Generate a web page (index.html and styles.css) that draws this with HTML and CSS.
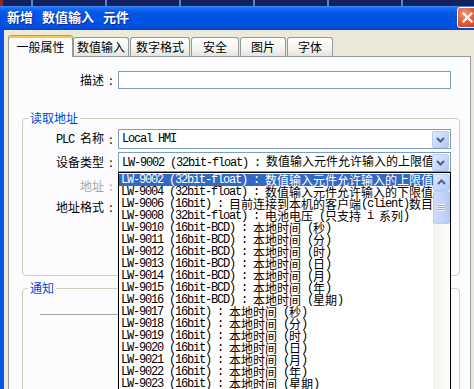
FILE: index.html
```html
<!DOCTYPE html>
<html lang="zh-CN">
<head>
<meta charset="utf-8">
<title>新增 数值输入 元件</title>
<link rel="stylesheet" href="styles.css">
</head>
<body>
<div class="top"></div>
<div class="titlebar">
  <div class="title">新增 数值输入 元件</div>
  <div class="close"><svg width="13" height="13" viewBox="0 0 13 13"><path d="M2.5 2.5L10.5 10.5M10.5 2.5L2.5 10.5" stroke="#fff" stroke-width="2.2" stroke-linecap="square"/></svg></div>
</div>
<div class="frame">
  <div class="tabs">
    <div class="tab sel w1">一般属性</div>
    <div class="tab w2">数值输入</div>
    <div class="tab w3">数字格式</div>
    <div class="tab w4">安全</div>
    <div class="tab w5">图片</div>
    <div class="tab w6">字体</div>
  </div>
  <div class="panel">
    <div class="row desc">
      <div class="lab">描述</div><div class="colon">:</div><div class="input"></div>
    </div>
    <fieldset class="grp g1">
      <legend>读取地址</legend>
      <div class="row">
        <div class="lab"><span class="mono">PLC </span>名称</div><div class="colon">:</div>
        <div class="combo">
          <span class="val mono">Local HMI</span>
          <span class="dd"><svg width="15" height="15" viewBox="0 0 15 15"><path d="M4 6L7.5 9.5L11 6" fill="none" stroke="#4D6185" stroke-width="2"/></svg></span>
        </div>
      </div>
      <div class="row r2">
        <div class="lab">设备类型</div><div class="colon">:</div>
        <div class="combo">
          <span class="val mono">LW-9002 (32bit-float) : <span class="k">数值输入元件允许输入的上限值</span></span>
          <span class="dd"><svg width="15" height="15" viewBox="0 0 15 15"><path d="M4 6L7.5 9.5L11 6" fill="none" stroke="#4D6185" stroke-width="2"/></svg></span>
          <div class="drop">
            <div class="items">
              <div class="it on">LW-9002 (32bit-float) : <span class="k">数值输入元件允许输入的上限值</span></div>
              <div class="it">LW-9004 (32bit-float) : <span class="k">数值输入元件允许输入的下限值</span></div>
              <div class="it">LW-9006 (16bit) : <span class="k">目前连接到本机的客户端</span>(client)<span class="k">数目</span></div>
              <div class="it">LW-9008 (32bit-float) : <span class="k">电池电压</span> (<span class="k">只支持</span> i <span class="k">系列</span>)</div>
              <div class="it">LW-9010 (16bit-BCD) : <span class="k">本地时间</span> (<span class="k">秒</span>)</div>
              <div class="it">LW-9011 (16bit-BCD) : <span class="k">本地时间</span> (<span class="k">分</span>)</div>
              <div class="it">LW-9012 (16bit-BCD) : <span class="k">本地时间</span> (<span class="k">时</span>)</div>
              <div class="it">LW-9013 (16bit-BCD) : <span class="k">本地时间</span> (<span class="k">日</span>)</div>
              <div class="it">LW-9014 (16bit-BCD) : <span class="k">本地时间</span> (<span class="k">月</span>)</div>
              <div class="it">LW-9015 (16bit-BCD) : <span class="k">本地时间</span> (<span class="k">年</span>)</div>
              <div class="it">LW-9016 (16bit-BCD) : <span class="k">本地时间</span> (<span class="k">星期</span>)</div>
              <div class="it">LW-9017 (16bit) : <span class="k">本地时间</span> (<span class="k">秒</span>)</div>
              <div class="it">LW-9018 (16bit) : <span class="k">本地时间</span> (<span class="k">分</span>)</div>
              <div class="it">LW-9019 (16bit) : <span class="k">本地时间</span> (<span class="k">时</span>)</div>
              <div class="it">LW-9020 (16bit) : <span class="k">本地时间</span> (<span class="k">日</span>)</div>
              <div class="it">LW-9021 (16bit) : <span class="k">本地时间</span> (<span class="k">月</span>)</div>
              <div class="it">LW-9022 (16bit) : <span class="k">本地时间</span> (<span class="k">年</span>)</div>
              <div class="it">LW-9023 (16bit) : <span class="k">本地时间</span> (<span class="k">星期</span>)</div>
            </div>
            <div class="sb">
              <div class="sbtn"><svg width="15" height="15" viewBox="0 0 15 15"><path d="M4 9L7.5 5.5L11 9" fill="none" stroke="#4D6185" stroke-width="2"/></svg></div>
              <div class="thumb"><span class="grip"></span></div>
            </div>
          </div>
        </div>
      </div>
      <div class="row r3">
        <div class="lab dis">地址</div><div class="colon dis">:</div>
      </div>
      <div class="row r4">
        <div class="lab">地址格式</div><div class="colon">:</div>
      </div>
    </fieldset>
    <fieldset class="grp g2">
      <legend>通知</legend>
      <div class="line"></div>
    </fieldset>
  </div>
</div>
</body>
</html>
```

FILE: styles.css
```css
* { box-sizing: border-box; }
html, body { margin: 0; padding: 0; }
body {
  width: 474px;
  height: 389px;
  overflow: hidden;
  background: #ECE9D8;
  font-family: "Noto Sans CJK SC", "Liberation Sans", sans-serif;
  font-size: 12px;
  color: #000;
}

.top {
  height: 6px;
  background:
    linear-gradient(90deg, #8a2a22 0 3px, transparent 3px),
    repeating-linear-gradient(90deg, transparent 0 31px, #5f7fc8 31px 33px, transparent 33px 74px),
    #13225e;
}

.titlebar {
  height: 24px;
  display: flex;
  justify-content: space-between;
  align-items: flex-start;
  background: linear-gradient(#3A8CF9 0, #1D6EF3 2px, #0659E7 6px, #0054E3 50%, #0051DF 85%, #0044CF 100%);
}
.title {
  color: #fff;
  font-weight: 700;
  font-size: 13px;
  line-height: 14px;
  padding: 4px 0 0 7px;
  word-spacing: 6px;
  white-space: nowrap;
  text-shadow: 1px 1px 0 #0B2A9C;
}
.close {
  flex: none;
  width: 21px;
  height: 21px;
  margin: 1px -4px 0 0;
  border: 1px solid #fff;
  border-radius: 3px;
  background: radial-gradient(circle at 35% 30%, #F29A7E 0, #E0623F 45%, #C43B18 100%);
  display: flex;
  align-items: center;
  justify-content: center;
}

.frame {
  height: 359px;
  border-left: 4px solid #0B52E6;
  padding: 5px 0 0 4px;
}

.tabs {
  display: flex;
  align-items: flex-end;
  height: 21px;
}
.tab {
  flex: none;
  height: 19px;
  margin-left: 1px;
  border: 1px solid #919B9C;
  border-bottom: 0;
  border-radius: 3px 3px 0 0;
  background: linear-gradient(#FFFFFF, #F5F4F0 60%, #E4E3DC);
  text-align: center;
  line-height: 18px;
  white-space: nowrap;
}
.tab.sel {
  height: 22px;
  margin: 0 0 -1px 0;
  position: relative;
  z-index: 1;
  background: #FCFCFE;
  border-top: 1px solid #E68B2C;
  box-shadow: inset 0 2px 0 #FFC83C;
  line-height: 21px;
}
.w1 { width: 65px; }
.w2 { width: 56px; margin-left: 0; }
.w3 { width: 60px; }
.w4 { width: 48px; }
.w5 { width: 46px; }
.w6 { width: 46px; }

.panel {
  width: 463px;
  height: 340px;
  border: 1px solid #919B9C;
  background: #FCFCFE;
}

.row {
  display: flex;
  align-items: center;
  height: 20px;
}
.desc { margin-top: 14px; height: 18px; }
.r2 { margin-top: 3px; }
.r3 { margin-top: 4px; }
.r4 { margin-top: 1px; }

.lab {
  flex: none;
  width: 81px;
  text-align: right;
  white-space: nowrap;
  line-height: 14px;
}
.desc .lab { width: 95px; }
.colon {
  flex: none;
  width: 14px;
  text-align: center;
  line-height: 14px;
}
.dis { color: #ACA899; }

.mono {
  font-family: "Liberation Mono", monospace;
  font-size: 12px;
  letter-spacing: -1.2px;
}
.k {
  font-family: "Noto Sans CJK SC", sans-serif;
  letter-spacing: 0;
}

.input {
  flex: none;
  width: 333px;
  height: 18px;
  border: 1px solid #7F9DB9;
  background: #fff;
}
.combo {
  flex: none;
  width: 333px;
  height: 20px;
  border: 1px solid #7F9DB9;
  background: #fff;
  display: flex;
  align-items: center;
  position: relative;
}
.val {
  flex: 1;
  min-width: 0;
  overflow: hidden;
  white-space: nowrap;
  padding-left: 3px;
  line-height: 14px;
}
.dd {
  flex: none;
  align-self: flex-end;
  width: 17px;
  height: 17px;
  margin-right: 1px;
  border: 1px solid #B9CCF6;
  border-radius: 2px;
  background: linear-gradient(135deg, #E2EBFE 0, #C6D7FC 55%, #B3C8F6 100%);
  display: flex;
  align-items: center;
  justify-content: center;
}

.grp {
  border: 1px solid #D0D0BF;
  border-radius: 4px;
  margin: 22px 10px 0 13px;
  padding: 4px 0 58px 0;
  min-width: 0;
}
.grp legend {
  padding: 0 2px;
  margin-left: 5px;
  color: #0046D5;
  line-height: 14px;
  font-size: 12px;
}
.g2 {
  margin-top: 5px;
  padding: 0 0 100px 0;
}
.line {
  margin: 19px 0 0 17px;
  width: 300px;
  border-top: 1px solid #A5A59A;
  border-bottom: 1px solid #fff;
}

.drop {
  position: absolute;
  left: -1px;
  right: -1px;
  top: calc(100% + 1px);
  height: 230px;
  border: 1px solid #000;
  background: #fff;
  display: flex;
  padding-top: 1px;
  z-index: 5;
}
.items {
  flex: 1;
  min-width: 0;
  font-family: "Liberation Mono", monospace;
  font-size: 12px;
  letter-spacing: -1.2px;
}
.it {
  height: 12px;
  line-height: 12px;
  padding-left: 2px;
  white-space: nowrap;
  overflow: hidden;
}
.it .k {
  vertical-align: top;
  line-height: 12px;
}
.it.on {
  background: #316AC5;
  color: #fff;
}
.sb {
  flex: none;
  width: 17px;
  display: flex;
  flex-direction: column;
  background: linear-gradient(90deg, #F3F1EC, #FEFEFB);
}
.sbtn {
  height: 17px;
  border: 1px solid #B9CCF6;
  border-radius: 2px;
  background: linear-gradient(135deg, #E2EBFE 0, #C6D7FC 55%, #B3C8F6 100%);
  display: flex;
  align-items: center;
  justify-content: center;
}
.thumb {
  height: 33px;
  border: 1px solid #B9CCF6;
  border-radius: 2px;
  background: linear-gradient(90deg, #CCDBFD 0, #C2D4FC 60%, #B5C9F7 100%);
  display: flex;
  align-items: center;
  justify-content: center;
}
.grip {
  width: 7px;
  height: 7px;
  background: repeating-linear-gradient(#EEF4FE 0 1px, #8CB0F8 1px 2px);
}
```
